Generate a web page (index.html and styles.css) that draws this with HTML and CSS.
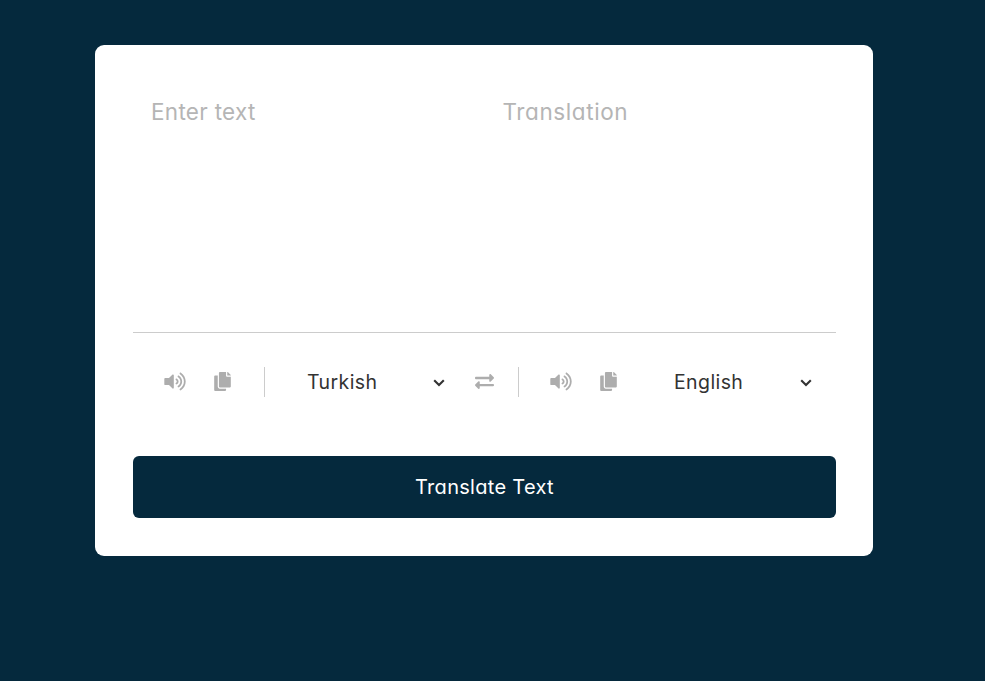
FILE: index.html
```html
<!DOCTYPE html>
<html lang="en">
<head>
<meta charset="utf-8">
<title>Translator</title>
<link rel="stylesheet" href="styles.css">
</head>
<body>
<svg class="sprite" aria-hidden="true">
  <symbol id="volume" viewBox="0 0 576 512"><path d="M215.03 71.05L126.06 160H24c-13.26 0-24 10.74-24 24v144c0 13.25 10.74 24 24 24h102.06l88.97 88.95c15.03 15.03 40.97 4.47 40.97-16.97V88.02c0-21.46-25.96-31.98-40.97-16.97zm233.32-51.08c-11.17-7.33-26.18-4.24-33.51 6.95-7.34 11.17-4.22 26.18 6.95 33.51 66.27 43.49 105.82 116.6 105.82 195.58 0 78.98-39.55 152.09-105.82 195.58-11.17 7.32-14.29 22.34-6.95 33.5 7.04 10.71 21.93 14.56 33.51 6.95C528.27 439.58 576 351.33 576 256S528.27 72.43 448.35 19.97zM480 256c0-63.53-32.06-121.94-85.77-156.24-11.19-7.14-26.03-3.82-33.12 7.46s-3.78 26.21 7.41 33.36C408.27 165.97 432 209.11 432 256s-23.73 90.02-63.48 115.42c-11.19 7.14-14.5 22.07-7.41 33.36 6.51 10.36 21.12 15.14 33.12 7.46C447.94 377.94 480 319.53 480 256zm-141.77-76.87c-11.58-6.33-26.19-2.16-32.61 9.45-6.39 11.61-2.16 26.2 9.45 32.61C327.98 228.28 336 241.63 336 256c0 14.38-8.02 27.72-20.92 34.81-11.61 6.41-15.84 21-9.45 32.61 6.43 11.66 21.05 15.8 32.61 9.45 28.23-15.55 45.77-45 45.77-76.88s-17.54-61.32-45.78-76.86z"/></symbol>
  <symbol id="copy" viewBox="0 0 448 512"><path d="M320 448v40c0 13.255-10.745 24-24 24H24c-13.255 0-24-10.745-24-24V120c0-13.255 10.745-24 24-24h72v296c0 30.879 25.121 56 56 56h168zm0-344V0H152c-13.255 0-24 10.745-24 24v368c0 13.255 10.745 24 24 24h272c13.255 0 24-10.745 24-24V128H344c-13.2 0-24-10.8-24-24zm120.971-31.029L375.029 7.029A24 24 0 0 0 358.059 0H352v96h96v-6.059a24 24 0 0 0-7.029-16.97z"/></symbol>
  <symbol id="exchange" viewBox="0 0 512 512"><path d="M0 168v-16c0-13.255 10.745-24 24-24h360V80c0-21.367 25.899-32.042 40.971-16.971l80 80c9.372 9.373 9.372 24.569 0 33.941l-80 80C409.956 271.982 384 261.456 384 240v-48H24c-13.255 0-24-10.745-24-24zm488 152H128v-48c0-21.314-25.862-32.08-40.971-16.971l-80 80c-9.372 9.373-9.372 24.569 0 33.941l80 80C102.057 463.997 128 453.437 128 432v-48h360c13.255 0 24-10.745 24-24v-16c0-13.255-10.745-24-24-24z"/></symbol>
  <symbol id="chevron" viewBox="0 0 12 8"><path d="M1.2 1.3L6 6.1l4.8-4.8"/></symbol>
</svg>
<main class="container">
  <div class="text-input">
    <textarea class="from-text" placeholder="Enter text"></textarea>
    <textarea class="to-text" placeholder="Translation" readonly></textarea>
  </div>
  <div class="controls">
    <div class="icons icons-from">
      <svg class="icon volume"><use href="#volume"/></svg>
      <svg class="icon copy"><use href="#copy"/></svg>
    </div>
    <div class="language">
      <select><option>Turkish</option></select>
      <svg class="chevron"><use href="#chevron"/></svg>
    </div>
    <svg class="icon exchange"><use href="#exchange"/></svg>
    <div class="icons icons-to">
      <svg class="icon volume"><use href="#volume"/></svg>
      <svg class="icon copy"><use href="#copy"/></svg>
    </div>
    <div class="language language-to">
      <select><option>English</option></select>
      <svg class="chevron"><use href="#chevron"/></svg>
    </div>
  </div>
  <button class="translate">Translate Text</button>
</main>
</body>
</html>
```
FILE: styles.css
```css
* { box-sizing: border-box; margin: 0; padding: 0; }
body {
  min-height: 681px;
  padding: 45px 0 0 95px;
  background: #05293d;
  font-family: Inter, "Liberation Sans", sans-serif;
  font-feature-settings: "cv11";
}
.sprite { position: absolute; width: 0; height: 0; }
.container {
  width: 778px;
  height: 511px;
  padding: 38px 37px 38px 38px;
  background: #fff;
  border-radius: 9px;
}
.text-input {
  display: flex;
  height: 250px;
  border-bottom: 1px solid #ccc;
}
textarea {
  flex: 1;
  padding: 13px 18px;
  border: 0;
  outline: 0;
  resize: none;
  background: none;
  font: inherit;
  font-size: 22.5px;
  line-height: 32px;
}
textarea::placeholder { color: #b5b5b5; }
.from-text { letter-spacing: 0.3px; }
.to-text { letter-spacing: 0.6px; }
.controls {
  display: flex;
  align-items: center;
  height: 98px;
}
.icons {
  display: flex;
  align-items: center;
  height: 30px;
  padding-bottom: 2px;
}
.icons-from {
  width: 132px;
  padding-left: 31px;
  border-right: 1px solid #ccc;
}
.icons-to {
  width: 133px;
  margin-left: 24px;
  padding-left: 31px;
  border-left: 1px solid #ccc;
}
.icon { height: 19px; fill: #adadad; }
.volume { width: 22px; }
.copy { width: 17px; margin-left: 28px; }
.exchange { width: 19px; margin: 0 0 2px 30px; }
.language {
  display: flex;
  align-items: center;
  width: 138px;
  margin-left: 42px;
}
.language-to { margin-left: 23px; }
select {
  flex: 1;
  min-width: 0;
  border: 0;
  outline: 0;
  appearance: none;
  background: none;
  color: #333;
  font: inherit;
  font-size: 19.5px;
  letter-spacing: 0.4px;
  line-height: 30px;
}
.chevron {
  width: 12px;
  height: 8px;
  margin-top: 2px;
  fill: none;
  stroke: #333;
  stroke-width: 2.1;
}
.translate {
  display: block;
  width: 100%;
  height: 62px;
  margin-top: 25px;
  border: 0;
  border-radius: 6px;
  background: #05293d;
  color: #fff;
  font: inherit;
  font-size: 20px;
  letter-spacing: 0.3px;
}
```
